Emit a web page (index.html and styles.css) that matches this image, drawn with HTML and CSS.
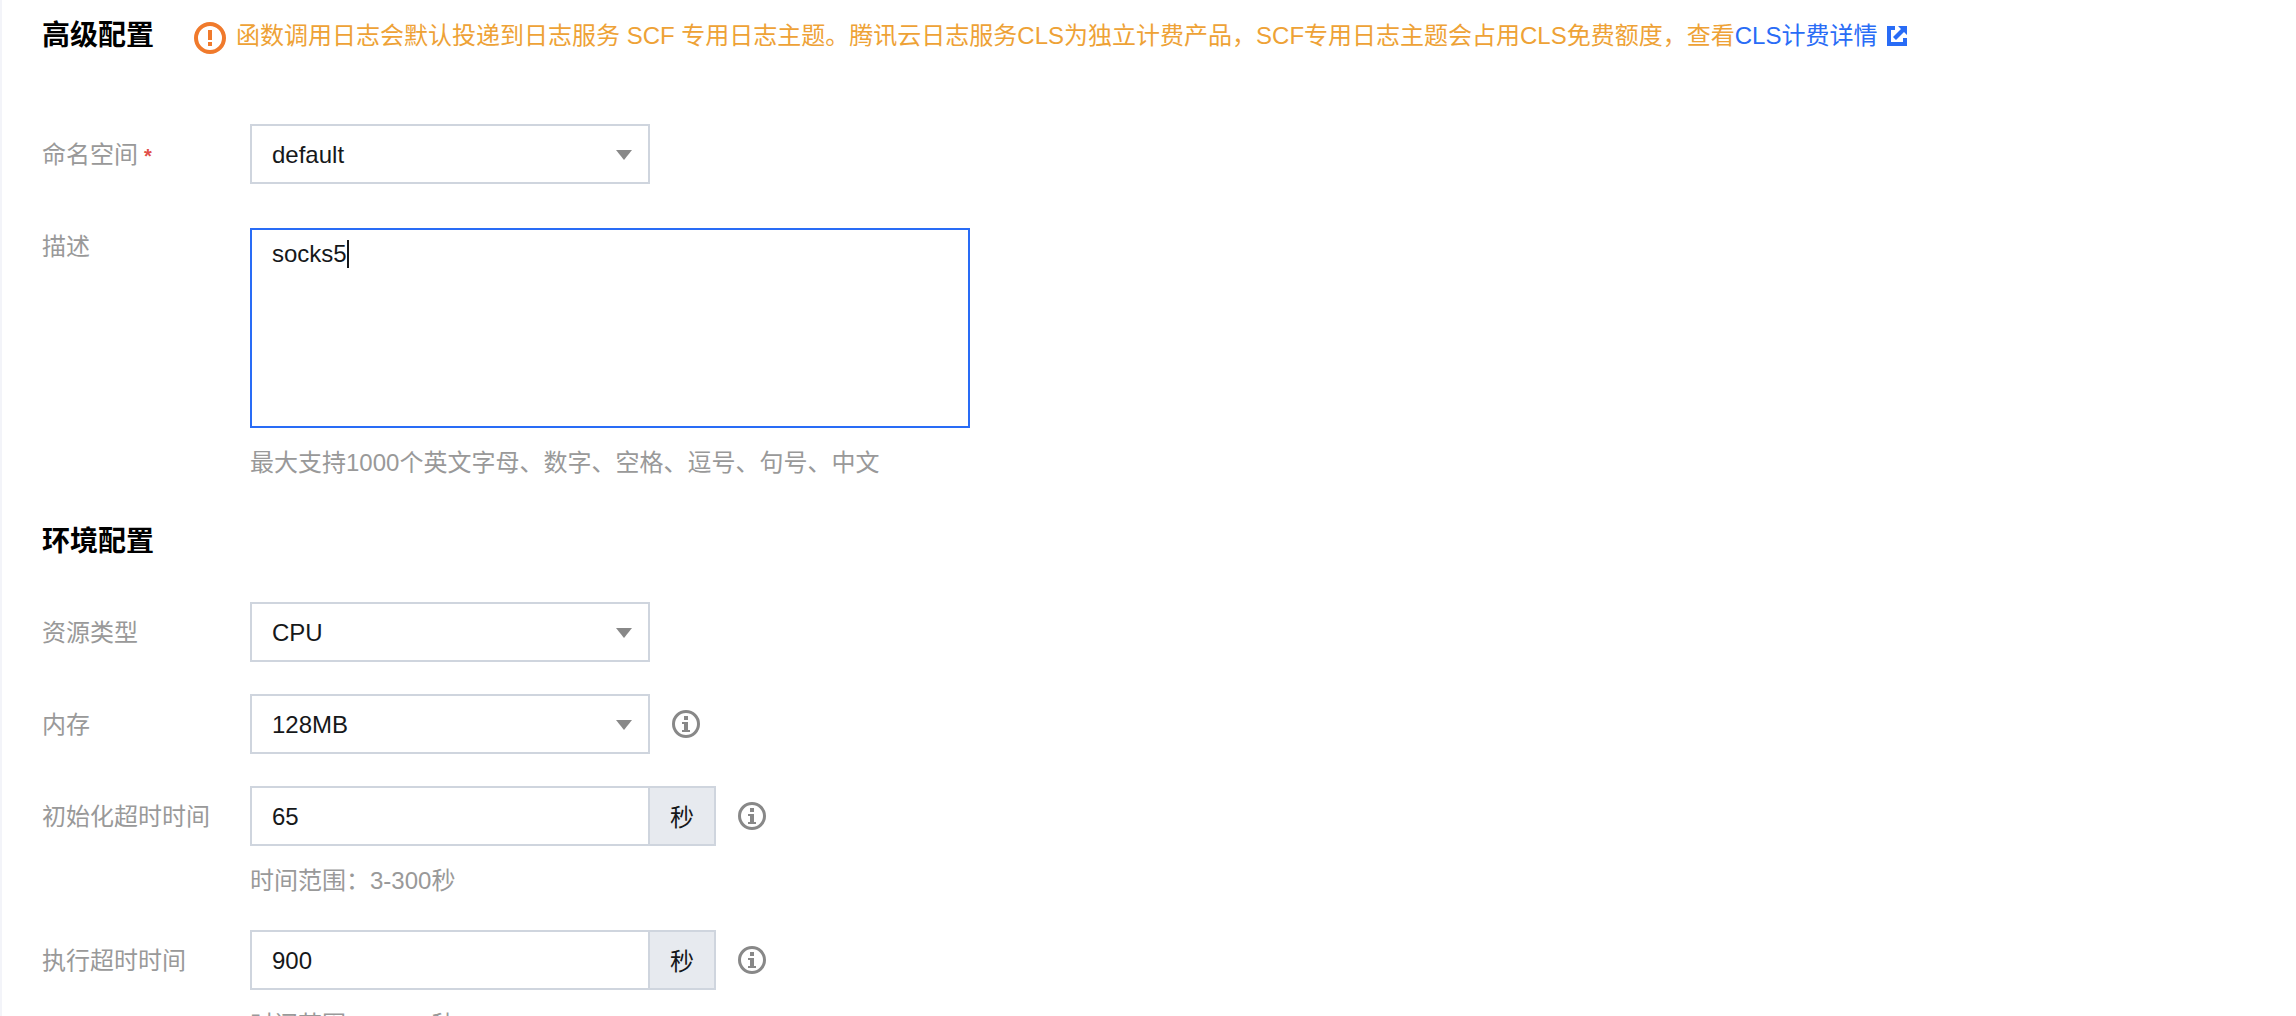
FILE: index.html
```html
<!DOCTYPE html>
<html lang="zh-CN">
<head>
  <meta charset="UTF-8">
  <meta name="viewport" content="width=device-width, initial-scale=1.0">
  <title>高级配置</title>
  <link rel="stylesheet" href="styles.css">
</head>
<body>
  <main class="panel">
    <form>
      <!-- Advanced settings -->
      <section class="section">
        <header class="section-header">
          <h2>高级配置</h2>
          <p class="notice">
            <svg class="notice-icon" viewBox="0 0 32 32" aria-hidden="true">
              <circle cx="16" cy="16" r="14" fill="none" stroke="#f07a2c" stroke-width="4"/>
              <path d="M14 8h4v10h-4zM14 20h4v4h-4z" fill="#f07a2c"/>
            </svg>
            <span>函数调用日志会默认投递到日志服务 SCF 专用日志主题。腾讯云日志服务CLS为独立计费产品，SCF专用日志主题会占用CLS免费额度，查看<a href="#">CLS计费详情<svg class="link-icon" viewBox="0 0 20 20" aria-hidden="true"><path d="M0 0h8v4H4v12h12v-4h4v8H0zM11 0h9v9l-3-3-8 8-3-3 8-8z" fill="#296cf6"/></svg></a></span>
          </p>
        </header>

        <div class="row row-namespace">
          <label for="namespace">命名空间<span class="required">*</span></label>
          <div class="control">
            <div class="select">
              <select id="namespace"><option>default</option></select>
              <svg class="arrow" viewBox="0 0 16 10" aria-hidden="true"><path d="M0 0h16l-8 10z"/></svg>
            </div>
          </div>
        </div>

        <div class="row row-text">
          <label for="description">描述</label>
          <div>
            <div class="textarea">
              <textarea id="description">socks5</textarea>
              <span class="caret"></span>
            </div>
            <p class="hint">最大支持1000个英文字母、数字、空格、逗号、句号、中文</p>
          </div>
        </div>
      </section>

      <!-- Environment settings -->
      <section class="section">
        <header class="section-header">
          <h2>环境配置</h2>
        </header>

        <div class="row">
          <label for="resource">资源类型</label>
          <div class="control">
            <div class="select">
              <select id="resource"><option>CPU</option></select>
              <svg class="arrow" viewBox="0 0 16 10" aria-hidden="true"><path d="M0 0h16l-8 10z"/></svg>
            </div>
          </div>
        </div>

        <div class="row">
          <label for="memory">内存</label>
          <div class="control">
            <div class="select">
              <select id="memory"><option>128MB</option></select>
              <svg class="arrow" viewBox="0 0 16 10" aria-hidden="true"><path d="M0 0h16l-8 10z"/></svg>
            </div>
            <svg class="info" viewBox="0 0 28 28" aria-hidden="true">
              <circle cx="14" cy="14" r="12.5"/>
              <path d="M12 6h4v4h-4zM10 12h6v8h2v2h-8v-2h2v-6h-2z"/>
            </svg>
          </div>
        </div>

        <div class="row">
          <label for="init-timeout">初始化超时时间</label>
          <div>
            <div class="control">
              <div class="input-group">
                <input type="text" id="init-timeout" value="65">
                <span class="unit">秒</span>
              </div>
              <svg class="info" viewBox="0 0 28 28" aria-hidden="true">
                <circle cx="14" cy="14" r="12.5"/>
                <path d="M12 6h4v4h-4zM10 12h6v8h2v2h-8v-2h2v-6h-2z"/>
              </svg>
            </div>
            <p class="hint">时间范围：3-300秒</p>
          </div>
        </div>

        <div class="row">
          <label for="run-timeout">执行超时时间</label>
          <div>
            <div class="control">
              <div class="input-group">
                <input type="text" id="run-timeout" value="900">
                <span class="unit">秒</span>
              </div>
              <svg class="info" viewBox="0 0 28 28" aria-hidden="true">
                <circle cx="14" cy="14" r="12.5"/>
                <path d="M12 6h4v4h-4zM10 12h6v8h2v2h-8v-2h2v-6h-2z"/>
              </svg>
            </div>
            <p class="hint">时间范围：1-900秒</p>
          </div>
        </div>
      </section>
    </form>
  </main>
</body>
</html>
```
FILE: styles.css
```css
/* General Styling */
* {
  box-sizing: border-box;
}

body {
  margin: 0;
  height: 100vh;
  overflow: hidden;
  font-family: "Liberation Sans", "Noto Sans CJK SC", sans-serif;
  font-size: 24px;
  line-height: 36px;
  color: #16181a;
  background: #fff;
}

h2, p {
  margin: 0;
}

a {
  color: #296cf6;
  text-decoration: none;
}

.panel {
  min-height: 100vh;
  padding: 18px 40px;
  border-left: 2px solid #f3f4f9;
}

/* Section header */
.section {
  margin-bottom: 44px;
}

.section-header {
  display: flex;
  align-items: center;
  gap: 40px;
  margin-bottom: 42px;
}

.section-header h2 {
  flex: none;
  font-size: 28px;
  font-weight: bold;
  line-height: 36px;
  color: #000;
}

.notice {
  display: flex;
  align-items: center;
  gap: 10px;
  color: #eea236;
}

.notice-icon {
  flex: none;
  width: 32px;
  height: 32px;
  margin-top: 4px;
}

.link-icon {
  width: 20px;
  height: 20px;
  margin-left: 10px;
  vertical-align: -2px;
}

/* Form rows */
.row {
  display: grid;
  grid-template-columns: 208px 1fr;
  margin-bottom: 32px;
}

.row label {
  padding-top: 2px;
  line-height: 58px;
  color: #999;
}

.row-namespace {
  margin-top: 70px;
  margin-bottom: 44px;
}

.row-text label {
  line-height: 34px;
}

.required {
  margin-left: 6px;
  color: #e1504a;
  font-size: 20px;
  font-weight: bold;
  line-height: 36px;
}

.control {
  display: flex;
  align-items: center;
  gap: 22px;
}

.hint {
  margin-top: 18px;
  line-height: 34px;
  color: #999;
}

select, input, textarea {
  display: block;
  margin: 0;
  border: 2px solid #cfd5de;
  border-radius: 0;
  outline: none;
  background: #fff;
  color: #16181a;
  font: inherit;
}

select, input {
  width: 400px;
  height: 60px;
  padding: 2px 20px 0;
}

/* Select */
.select {
  position: relative;
}

select {
  appearance: none;
}

.arrow {
  position: absolute;
  top: 26px;
  right: 18px;
  width: 16px;
  height: 10px;
  fill: #888;
  pointer-events: none;
}

/* Textarea */
.textarea {
  position: relative;
  max-width: 720px;
}

textarea {
  width: 100%;
  height: 200px;
  padding: 6px 20px;
  border-color: #296cf6;
  resize: none;
  caret-color: transparent;
}

.caret {
  position: absolute;
  top: 12px;
  left: 97px;
  width: 2px;
  height: 28px;
  background: #16181a;
}

/* Input with unit */
.input-group {
  display: flex;
}

.unit {
  width: 68px;
  height: 60px;
  margin-left: -2px;
  border: 2px solid #cfd5de;
  background: #e7eaef;
  line-height: 60px;
  text-align: center;
}

.info {
  width: 28px;
  height: 28px;
  fill: #888;
}

.info circle {
  fill: none;
  stroke: #888;
  stroke-width: 3;
}
```
